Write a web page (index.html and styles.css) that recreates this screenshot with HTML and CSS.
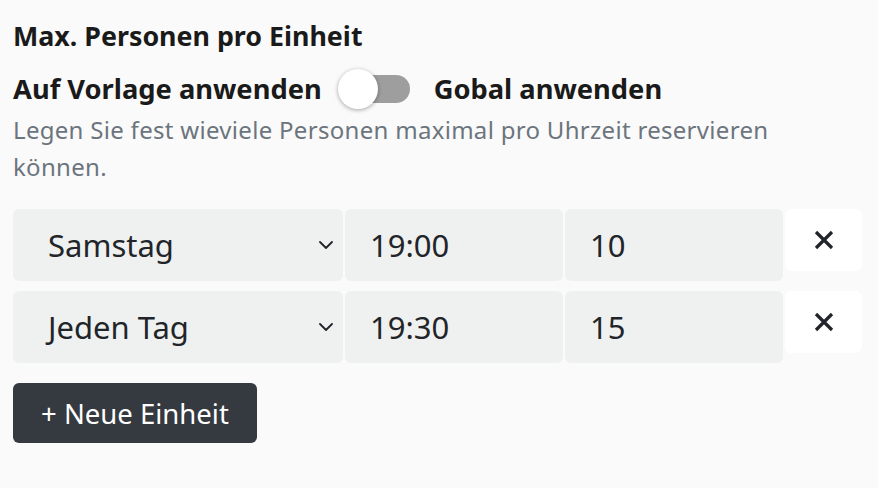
FILE: index.html
```html
<!DOCTYPE html>
<html lang="de">
<head>
    <meta charset="UTF-8">
    <title>Max. Personen pro Einheit</title>
    <link rel="stylesheet" href="styles.css">
</head>
<body>
    <div class="panel">
        <h3 class="title">Max. Personen pro Einheit</h3>
        <div class="scope">
            <span>Auf Vorlage anwenden</span>
            <span class="switch"><span class="knob"></span></span>
            <span>Gobal anwenden</span>
        </div>
        <p class="hint">Legen Sie fest wieviele Personen maximal pro Uhrzeit reservieren können.</p>

        <div class="units">
            <div class="unit">
                <div class="field day">
                    <span>Samstag</span>
                    <svg class="chevron" width="14" height="8" viewBox="0 0 14 8"><path d="M1 1l6 6 6-6" fill="none" stroke="#212529" stroke-width="1.8" stroke-linecap="round" stroke-linejoin="round"/></svg>
                </div>
                <div class="field">19:00</div>
                <div class="field">10</div>
                <button class="remove" type="button">
                    <svg width="22" height="20" viewBox="0 0 22 20"><path d="M3 2l16 16M19 2L3 18" stroke="#212529" stroke-width="3.2"/></svg>
                </button>
            </div>
            <div class="unit">
                <div class="field day">
                    <span>Jeden Tag</span>
                    <svg class="chevron" width="14" height="8" viewBox="0 0 14 8"><path d="M1 1l6 6 6-6" fill="none" stroke="#212529" stroke-width="1.8" stroke-linecap="round" stroke-linejoin="round"/></svg>
                </div>
                <div class="field">19:30</div>
                <div class="field">15</div>
                <button class="remove" type="button">
                    <svg width="22" height="20" viewBox="0 0 22 20"><path d="M3 2l16 16M19 2L3 18" stroke="#212529" stroke-width="3.2"/></svg>
                </button>
            </div>
        </div>

        <button class="add" type="button">+ Neue Einheit</button>
    </div>
</body>
</html>
```

FILE: styles.css
```css
body {
    margin: 0;
    background: #fafafa;
    font-family: "Noto Sans", "Open Sans", sans-serif;
    color: #212529;
}
.panel {
    padding: 16px 13px;
}
.title {
    margin: 0;
    font-size: 26.8px;
    line-height: 40px;
    font-weight: 700;
    color: #1a1a1a;
}
.scope {
    display: flex;
    align-items: center;
    margin-top: 13px;
    font-size: 27.3px;
    font-weight: 700;
    color: #1a1a1a;
    line-height: 40px;
}
.switch {
    position: relative;
    width: 71px;
    height: 28px;
    margin: 0 24px 0 17px;
    border-radius: 14px;
    background: #9e9e9e;
}
.switch .knob {
    position: absolute;
    left: -1px;
    top: -6px;
    width: 40px;
    height: 40px;
    border-radius: 50%;
    background: #fff;
    box-shadow: 0 1px 4px rgba(0, 0, 0, 0.35);
}
.hint {
    margin: 2px 0 0;
    max-width: 800px;
    font-size: 24px;
    letter-spacing: 0.3px;
    line-height: 37px;
    color: #6c757d;
}
.units {
    display: flex;
    flex-direction: column;
    gap: 10px;
    margin-top: 24px;
}
.unit {
    display: grid;
    grid-template-columns: 330px 218px 218px 77px;
    column-gap: 2px;
    align-items: start;
}
.field {
    display: flex;
    align-items: center;
    height: 72px;
    padding: 0 25px;
    box-sizing: border-box;
    border-radius: 6px;
    background: #eff0f0;
    font-size: 31px;
}
.field.day {
    justify-content: space-between;
    padding: 0 10px 0 35px;
}
.remove {
    display: flex;
    align-items: center;
    justify-content: center;
    height: 62px;
    border: 0;
    border-radius: 6px;
    background: #fff;
    padding: 0;
}
.add {
    margin-top: 20px;
    height: 60px;
    padding: 0 28px;
    border: 0;
    border-radius: 6px;
    background: #343a40;
    color: #fff;
    font-family: inherit;
    font-size: 27.5px;
}
```
